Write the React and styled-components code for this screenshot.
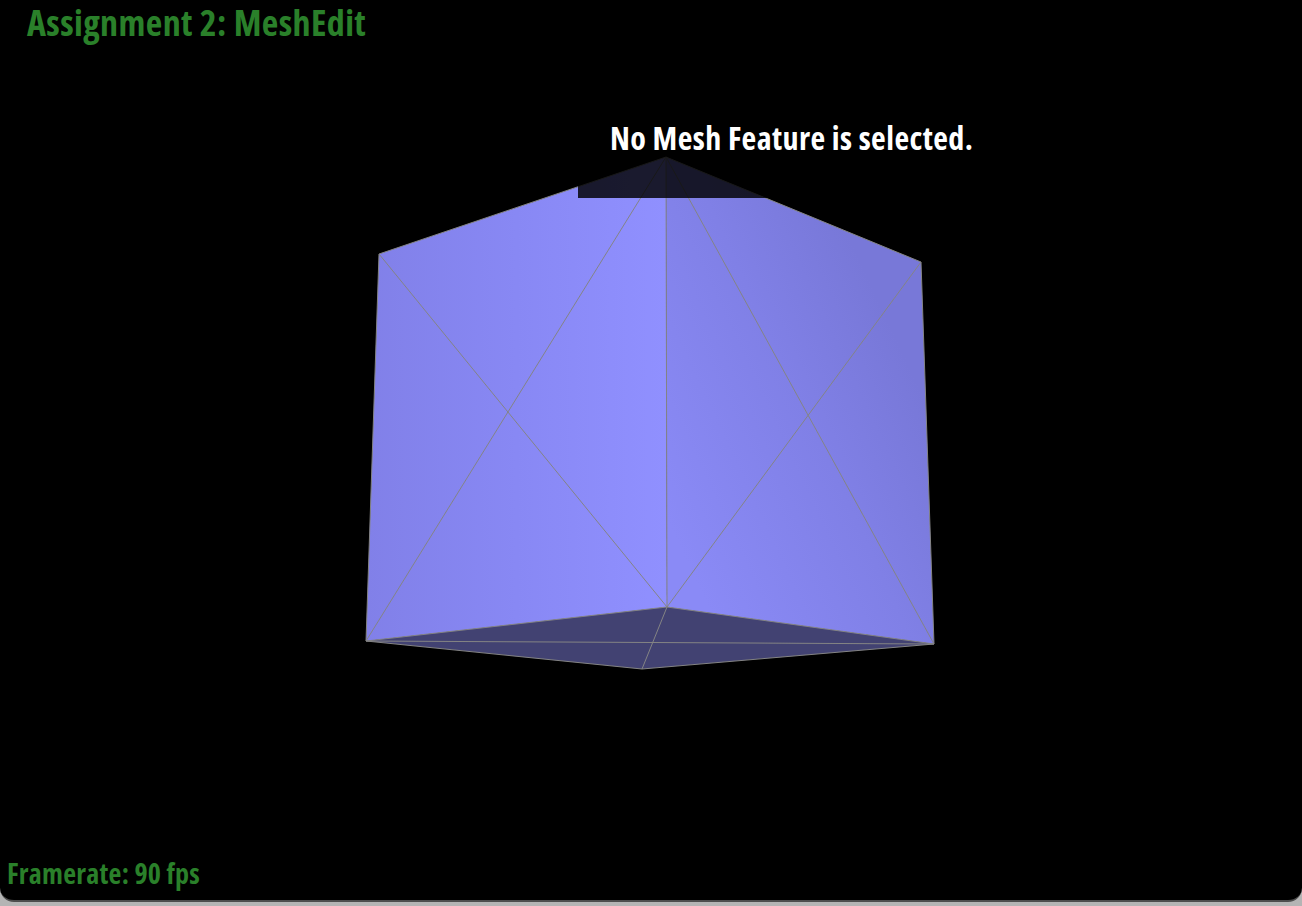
import React from 'react';
import styled, { createGlobalStyle } from 'styled-components';

const GlobalStyle = createGlobalStyle`
    html, body {
        margin: 0;
        height: 100%;
        background: #c4c4c4;
    }
`;

const Page = styled.div`
    width: 1302px;
    height: 906px;
    overflow: hidden;
    background: linear-gradient(#cfcfcf, #b4b4b4);
`;

const Viewport = styled.main`
    position: relative;
    height: 900px;
    display: flex;
    flex-direction: column;
    justify-content: space-between;
    background: #000;
    border-bottom: 2px solid #4d4d4d;
    border-radius: 0 0 14px 14px;
    overflow: hidden;
    font-family: "Open Sans", "Liberation Sans", sans-serif;
    font-stretch: condensed;
    font-weight: 700;
`;

const Title = styled.h1`
    position: relative;
    margin: 0;
    padding: 0 0 0 27px;
    font-size: 36px;
    line-height: 46px;
    font-weight: 700;
    letter-spacing: 0.011em;
    color: #2a802a;
`;

const Framerate = styled.div`
    position: relative;
    padding: 0 0 10px 7px;
    font-size: 28px;
    line-height: 34px;
    letter-spacing: 0.009em;
    color: #2a802a;
`;

const MeshCanvas = styled.svg`
    position: absolute;
    left: 0;
    top: 0;
`;

const InfoBox = styled.div`
    position: absolute;
    left: 578px;
    top: 118px;
    width: 426px;
    height: 80px;
    padding: 0 0 0 32px;
    box-sizing: border-box;
    background: rgba(0, 0, 0, 0.82);
    color: #fff;
    font-size: 32px;
    line-height: 40px;
    letter-spacing: 0.014em;
`;

const edges = [
    [379, 254, 666, 157], [666, 157, 921, 262], [921, 262, 934, 644],
    [379, 254, 366, 641], [366, 641, 642, 669], [642, 669, 934, 644],
    [666, 157, 667, 607], [379, 254, 667, 607], [921, 262, 667, 607],
    [666, 157, 366, 641], [666, 157, 934, 644], [366, 641, 667, 607],
    [934, 644, 667, 607], [366, 641, 934, 644], [667, 607, 642, 669],
];

const MeshView = () => (
    <MeshCanvas width="1302" height="900" viewBox="0 0 1302 900">
        <defs>
            <linearGradient id="leftFace" gradientUnits="userSpaceOnUse" x1="366" y1="0" x2="667" y2="0">
                <stop offset="0" stopColor="#8180e8" />
                <stop offset="0.5" stopColor="#8888f4" />
                <stop offset="1" stopColor="#9090ff" />
            </linearGradient>
            <linearGradient id="rightFace" gradientUnits="userSpaceOnUse" x1="667" y1="520" x2="925" y2="400">
                <stop offset="0" stopColor="#8a8af6" />
                <stop offset="0.6" stopColor="#8080e6" />
                <stop offset="1" stopColor="#7878d8" />
            </linearGradient>
        </defs>
        <polygon points="366,641 667,607 934,644 642,669" fill="#424272" />
        <polygon points="379,254 666,157 667,607 366,641" fill="url(#leftFace)" />
        <polygon points="666,157 921,262 934,644 667,607" fill="url(#rightFace)" />
        {edges.map(([x1, y1, x2, y2]) => (
            <line key={`${x1}-${y1}-${x2}-${y2}`} x1={x1} y1={y1} x2={x2} y2={y2} stroke="#848484" strokeWidth="1" />
        ))}
    </MeshCanvas>
);

const App = () => (
    <Page>
        <GlobalStyle />
        <Viewport>
            <MeshView />
            <InfoBox>No Mesh Feature is selected.</InfoBox>
            <Title>Assignment 2: MeshEdit</Title>
            <Framerate>Framerate: 90 fps</Framerate>
        </Viewport>
    </Page>
);

export default App;
